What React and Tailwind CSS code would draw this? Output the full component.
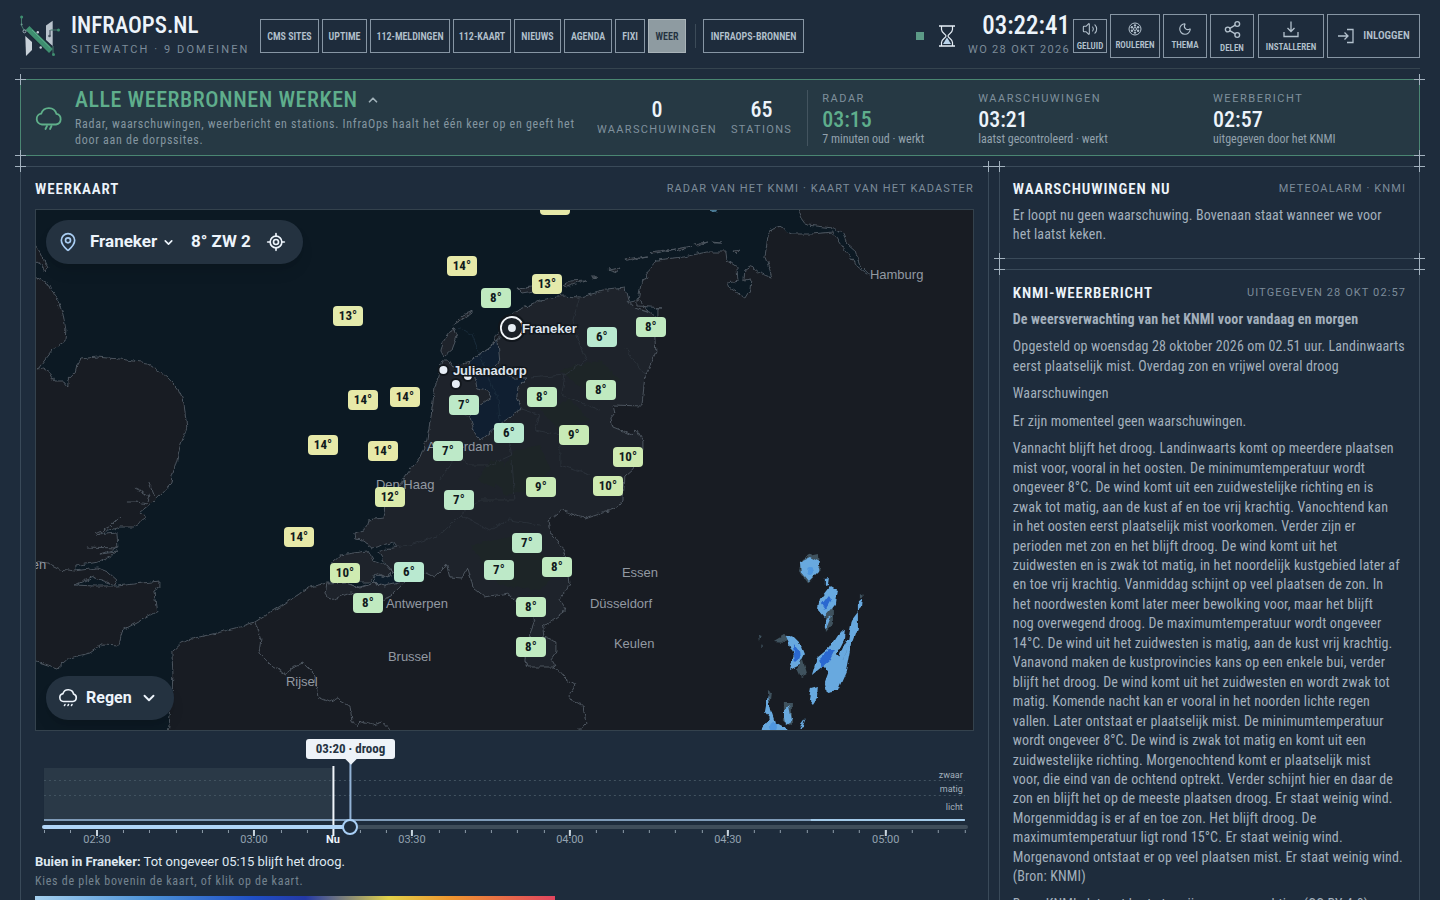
import { ChevronDown, ChevronUp, LocateFixed, MapPin, Moon, Share2, Volume2 } from "lucide-react";

const tabs = [
    { name: "CMS SITES", width: "w-[59px]" },
    { name: "UPTIME", width: "w-[45px]" },
    { name: "112-MELDINGEN", width: "w-20" },
    { name: "112-KAART", width: "w-[58px]" },
    { name: "NIEUWS", width: "w-[47px]" },
    { name: "AGENDA", width: "w-12" },
    { name: "FIXI", width: "w-[30px]" },
    { name: "WEER", width: "w-[38px]", active: true },
];

// Temperature readings, placed on the map canvas
const stations = [
    [555, 205, 14], [462, 266, 14], [547, 284, 13], [496, 298, 8], [348, 316, 13], [651, 327, 8],
    [602, 337, 6], [601, 390, 8], [542, 397, 8], [405, 397, 14], [363, 400, 14], [464, 405, 7],
    [509, 433, 6], [574, 435, 9], [323, 445, 14], [383, 451, 14], [448, 451, 7], [628, 457, 10],
    [608, 486, 10], [541, 487, 9], [390, 497, 12], [459, 500, 7], [299, 537, 14], [527, 543, 7],
    [557, 567, 8], [499, 570, 7], [345, 573, 10], [409, 572, 6], [368, 603, 8], [531, 607, 8], [531, 647, 8],
];

const temperatureColors = {
    6: "#b9e9d0",
    7: "#bde9c8",
    8: "#c0eac0",
    9: "#c8eab6",
    10: "#cfebb1",
    12: "#dcebab",
    13: "#e4eaab",
    14: "#e7e9a8",
};

const cities = [
    ["Hamburg", 870, 279], ["Amsterdam", 427, 451], ["Den Haag", 376, 489], ["Antwerpen", 386, 608],
    ["Brussel", 388, 661], ["Rijsel", 286, 686], ["Essen", 622, 577], ["Düsseldorf", 590, 608],
    ["Keulen", 614, 648], ["Londen", 3, 569],
];

const report = [
    "Opgesteld op woensdag 28 oktober 2026 om 02.51 uur. Landinwaarts\neerst plaatselijk mist. Overdag zon en vrijwel overal droog",
    "Waarschuwingen",
    "Er zijn momenteel geen waarschuwingen.",
    "Vannacht blijft het droog. Landinwaarts komt op meerdere plaatsen\nmist voor, vooral in het oosten. De minimumtemperatuur wordt\nongeveer 8°C. De wind komt uit een zuidwestelijke richting en is\nzwak tot matig, aan de kust af en toe vrij krachtig. Vanochtend kan\nin het oosten eerst plaatselijk mist voorkomen. Verder zijn er\nperioden met zon en het blijft droog. De wind komt uit het\nzuidwesten en is zwak tot matig, in het noordelijk kustgebied later af\nen toe vrij krachtig. Vanmiddag schijnt op veel plaatsen de zon. In\nhet noordwesten komt later meer bewolking voor, maar het blijft\nnog overwegend droog. De maximumtemperatuur wordt ongeveer\n14°C. De wind uit het zuidwesten is matig, aan de kust vrij krachtig.\nVanavond maken de kustprovincies kans op een enkele bui, verder\nblijft het droog. De wind komt uit het zuidwesten en wordt zwak tot\nmatig. Komende nacht kan er vooral in het noorden lichte regen\nvallen. Later ontstaat er plaatselijk mist. De minimumtemperatuur\nwordt ongeveer 8°C. De wind is zwak tot matig en komt uit een\nzuidwestelijke richting. Morgenochtend komt er plaatselijk mist\nvoor, die eind van de ochtend optrekt. Verder schijnt hier en daar de\nzon en blijft het op de meeste plaatsen droog. Er staat weinig wind.\nMorgenmiddag is er af en toe zon. Het blijft droog. De\nmaximumtemperatuur ligt rond 15°C. Er staat weinig wind.\nMorgenavond ontstaat er op veel plaatsen mist. Er staat weinig wind.\n(Bron: KNMI)",
    "Bron: KNMI, dataset korte termijn weerverwachting (CC BY 4.0)",
];

const hours = [["02:30", 97], ["03:00", 254], ["03:30", 412], ["04:00", 570], ["04:30", 728], ["05:00", 886]];

const Cross = ({ place }) => (
    <span className={`absolute size-[11px] ${place}`} aria-hidden="true">
        <span className="absolute inset-x-0 top-[5px] h-px bg-[#a3b2bf]"></span>
        <span className="absolute inset-y-0 left-[5px] w-px bg-[#a3b2bf]"></span>
    </span>
);

const Corners = () => (
    <>
        <Cross place="-left-[6px] -top-[6px]" />
        <Cross place="-right-[6px] -top-[6px]" />
        <Cross place="-left-[6px] -bottom-[6px]" />
        <Cross place="-right-[6px] -bottom-[6px]" />
    </>
);

const Logo = () => (
    <svg viewBox="0 0 40 42" className="h-[42px] w-10 shrink-0" fill="none">
        <path d="M5.3 21 12 27v8l-6 6z" fill="#c9d2da" />
        <path d="M26 10.5 32.7 5.7V31L26 25z" fill="#b9c3cc" />
        <path d="M30 15v6" stroke="#33414f" strokeWidth="1" />
        <path d="m10 15.5 19.5 19" stroke="#1d2a38" strokeWidth="8" />
        <path d="m9.5 15 19.5 19" stroke="#3f8f70" strokeWidth="5.5" strokeLinecap="square" />
        <path d="m12 15 18 17.500" stroke="#5cae8c" strokeWidth="1" />
        <path d="M1.500 2v8.500l3 5.500M38.500 15h-8M33 31v8" stroke="#46796d" strokeWidth="1" />
        <circle cx="1.600" cy="2" r="1.500" fill="#3f8f70" />
        <circle cx="1.600" cy="9.500" r="1" fill="#6f9f92" />
        <circle cx="4.500" cy="16.300" r="1.500" stroke="#9aa8b4" />
        <circle cx="38.500" cy="15" r="1.500" fill="#3f8f70" />
        <circle cx="33.500" cy="39.500" r="1.500" fill="#3f8f70" />
        <circle cx="17.800" cy="17.300" r="1.200" fill="#c9d2da" />
        <circle cx="20.700" cy="32.500" r="1.200" fill="#c9d2da" />
        <circle cx="29.500" cy="21" r="1.300" fill="#46535f" />
    </svg>
);

const ActionButton = ({ label, size, children }) => (
    <button type="button" className={`flex shrink-0 flex-col items-center justify-center gap-1 border border-[#8796a4] text-[#b3c1cd] ${size}`}>
        {children}
        <span className="font-['Roboto_Condensed',sans-serif] text-[9px] leading-[10px] font-semibold">{label}</span>
    </button>
);

const Header = () => (
    <header className="flex items-center border-b border-[#35444f] pt-3.5 pb-2.5">
        <div className="flex w-60 shrink-0 items-center gap-[11px]">
            <Logo />
            <div>
                <h1 className="font-['Roboto_Condensed',sans-serif] text-[23px] leading-6 font-medium text-[#edf4fb]">INFRAOPS.NL</h1>
                <p className="mt-1 text-[11px] leading-4 tracking-[0.19em] whitespace-nowrap text-[#7c8b99]">SITEWATCH · 9 DOMEINEN</p>
            </div>
        </div>

        <nav className="flex shrink-0 items-center gap-[3px] font-['Roboto_Condensed',sans-serif] text-[10px] font-semibold">
            {tabs.map((tab) => (
                <a
                    key={tab.name}
                    href="#"
                    className={`flex h-[34px] shrink-0 items-center justify-center border whitespace-nowrap ${tab.width} ${tab.active ? "border-[#a9b3b8] bg-[#8e9ba1] text-[#243240]" : "border-[#8796a4] text-[#b3c1cd]"}`}
                >
                    {tab.name}
                </a>
            ))}
            <span className="mr-1 ml-1.5 h-6 w-px bg-[#3c4b58]"></span>
            <a href="#" className="flex h-[34px] w-[101px] shrink-0 items-center justify-center border border-[#8796a4] whitespace-nowrap text-[#b3c1cd]">INFRAOPS-BRONNEN</a>
        </nav>

        <div className="ml-auto flex items-center gap-[3px]">
            <span className="mr-3 size-2 bg-[#5c9a86]"></span>
            <svg viewBox="0 0 16 22" className="mr-2.5 h-[22px] w-4 shrink-0" fill="none" stroke="#e6eef6" strokeWidth="1.200">
                <path d="M0 1h16M0 21h16" strokeWidth="1.500" />
                <path d="M2.500 1v3.500C2.500 8 7 9 7 11s-4.500 3-4.500 6.500V21M13.500 1v3.500C13.500 8 9 9 9 11s4.500 3 4.500 6.500V21" />
                <path d="M8 12.500 12 19H4z" fill="#b9d3ea" stroke="none" />
            </svg>
            <div className="text-right">
                <p className="font-['Roboto_Condensed',sans-serif] text-[25px] leading-6 font-medium text-[#edf4fb]">03:22:41</p>
                <p className="mt-1 text-[11px] leading-4 tracking-[0.12em] whitespace-nowrap text-[#7c8b99]">WO 28 OKT 2026</p>
            </div>
            <ActionButton label="GELUID" size="h-[34px] w-[34px]">
                <Volume2 size={16} strokeWidth={1.6} />
            </ActionButton>
            <ActionButton label="ROULEREN" size="h-11 w-[50px]">
                <svg viewBox="0 0 14 14" className="size-3.5" fill="none" stroke="currentColor" strokeWidth="1">
                    <circle cx="7" cy="7" r="6" />
                    <circle cx="7" cy="7" r="1.500" />
                    <g fill="currentColor" stroke="none">
                        <circle cx="7" cy="3.400" r="1.200" />
                        <circle cx="10.100" cy="5.200" r="1.200" />
                        <circle cx="10.100" cy="8.800" r="1.200" />
                        <circle cx="7" cy="10.600" r="1.200" />
                        <circle cx="3.900" cy="8.800" r="1.200" />
                        <circle cx="3.900" cy="5.200" r="1.200" />
                    </g>
                </svg>
            </ActionButton>
            <ActionButton label="THEMA" size="h-11 w-11">
                <Moon size={14} strokeWidth={2} />
            </ActionButton>
            <ActionButton label="DELEN" size="h-11 w-11">
                <Share2 size={19} strokeWidth={1.7} />
            </ActionButton>
            <ActionButton label="INSTALLEREN" size="ml-px h-11 w-[66px]">
                <svg viewBox="0 0 18 18" className="size-[18px]" fill="none" stroke="currentColor" strokeWidth="1.300">
                    <path d="M9 1.500v10M5.500 8 9 11.500 12.500 8M2 12v4.500h14V12" />
                </svg>
            </ActionButton>
            <button type="button" className="flex h-11 w-[93px] shrink-0 items-center justify-center gap-2 border border-[#8796a4] font-['Roboto_Condensed',sans-serif] text-[11px] font-semibold text-[#b3c1cd]">
                <svg viewBox="0 0 18 18" className="size-[18px]" fill="none" stroke="currentColor" strokeWidth="1.300">
                    <path d="M1 9h10M7.500 5.500 11 9l-3.500 3.500M10 2.500h6v13h-6" />
                </svg>
                INLOGGEN
            </button>
        </div>
    </header>
);

const Source = ({ label, time, note, green }) => (
    <div>
        <p className="text-[11px] leading-4 tracking-[0.14em] text-[#7f909c]">{label}</p>
        <p className={`font-['Roboto_Condensed',sans-serif] text-[22px] leading-[26px] font-medium ${green ? "text-[#5fae8c]" : "text-[#edf4fb]"}`}>{time}</p>
        <p className="font-['Roboto_Condensed',sans-serif] text-[12px] leading-3 whitespace-nowrap text-[#93a2ad]">{note}</p>
    </div>
);

const StatusBar = () => (
    <section className="relative mt-2.5 flex items-center border border-[#4a8672] bg-[#263944] px-3.5 pt-2 pb-[7px]">
        <Corners />
        <svg viewBox="0 0 28 28" className="size-7 shrink-0" fill="none" stroke="#5fb08a" strokeWidth="1.800" strokeLinecap="round" strokeLinejoin="round">
            <path d="M7 20.500a5.500 5.500 0 0 1-.8-10.900 8 8 0 0 1 15.300.3A5.400 5.400 0 0 1 21 20.500z" />
            <path d="m12 22-1.500 3M16.500 22 15 25" />
        </svg>
        <div className="ml-3 w-[512px] shrink-0">
            <h2 className="flex items-center gap-2 font-['Roboto_Condensed',sans-serif] text-[22px] leading-6 font-medium tracking-wide text-[#5fae8c]">
                ALLE WEERBRONNEN WERKEN
                <ChevronUp size={14} strokeWidth={3} className="text-[#9fb0b8]" />
            </h2>
            <p className="mt-1 font-['Roboto_Condensed',sans-serif] text-[12px] leading-4 tracking-[0.06em] text-[#8496a0]">
                Radar, waarschuwingen, weerbericht en stations. InfraOps haalt het één keer op en geeft het door aan de dorpssites.
            </p>
        </div>
        <div className="ml-2.5 flex shrink-0 gap-3.5 text-center">
            {[["0", "WAARSCHUWINGEN"], ["65", "STATIONS"]].map(([value, label]) => (
                <div key={label}>
                    <p className="font-['Roboto_Condensed',sans-serif] text-[22px] leading-6 font-medium text-[#edf4fb]">{value}</p>
                    <p className="text-[11px] leading-4 tracking-[0.12em] text-[#7f909c]">{label}</p>
                </div>
            ))}
        </div>
        <div className="ml-[15px] grid h-14 flex-1 grid-cols-[156fr_235fr_192fr] items-center border-l border-[#43545f] pl-3.5">
            <Source label="RADAR" time="03:15" note="7 minuten oud · werkt" green />
            <Source label="WAARSCHUWINGEN" time="03:21" note="laatst gecontroleerd · werkt" />
            <Source label="WEERBERICHT" time="02:57" note="uitgegeven door het KNMI" />
        </div>
    </section>
);

const PanelTitle = ({ title, note }) => (
    <div className="flex h-5 items-center justify-between">
        <h2 className="font-['Roboto_Condensed',sans-serif] text-[15px] leading-5 font-semibold tracking-[0.06em] text-[#edf4fb]">{title}</h2>
        <span className="text-[11px] leading-5 tracking-[0.1em] text-[#7c8b99]">{note}</span>
    </div>
);

const MapDrawing = () => (
    <svg viewBox="36 210 937 520" preserveAspectRatio="xMidYMid slice" className="absolute inset-0 size-full">
        <defs>
            <filter id="rugged" x="-5%" y="-5%" width="110%" height="110%" colorInterpolationFilters="sRGB">
                <feTurbulence type="fractalNoise" baseFrequency="0.15" numOctaves="3" seed="4" />
                <feDisplacementMap in="SourceGraphic" scale="5" xChannelSelector="R" yChannelSelector="G" />
            </filter>
            <filter id="rain" x="-10%" y="-10%" width="120%" height="120%" colorInterpolationFilters="sRGB">
                <feTurbulence type="fractalNoise" baseFrequency="0.12" numOctaves="2" seed="9" />
                <feDisplacementMap in="SourceGraphic" scale="5" xChannelSelector="R" yChannelSelector="G" />
                <feGaussianBlur stdDeviation="0.7" />
            </filter>
        </defs>
        <rect x="36" y="210" width="937" height="520" fill="#0c1923" />
        <g filter="url(#rugged)" stroke="#525b65" strokeWidth="0.900" strokeLinejoin="round">
            {/* Great Britain */}
            <path fill="#181c23" d="M30 236 36 246 42 255 48 268 46 272 43 266 36 262 30 262V277L36 277 50 285 57 300 63 313 66 330 65 341 53 350 45 360 38 369 43 368 50 373 54 381 63 381 68 387 68 380 75 373 77 365 81 359 97 357 120 359 147 363 167 377 178 388 184 403 187 428 180 447 177 460 172 477 171 483 162 493 150 505 140 513 147 518 133 527 120 527 110 530 97 535 117 533 118 548 100 554 117 552 103 561 75 566 75 571 98 568 108 572 117 580 115 585 93 577 75 585 95 586 117 586 160 581 160 587 154 591 157 612 138 622 123 630 119 645 103 644 90 653 70 658 57 669 36 662H30z" />
            <path fill="none" d="M127 502 137 502 147 504 150 496 135 489M149 482 155 497M95 534 110 527 120 517M87 547 117 548M36 561 48 563 60 569 75 571" />
            {/* Belgium, France, Germany */}
            <path fill="#181c23" d="M168 735 172 700 173 673 172 652 182 643 195 638 217 633 240 627 255 622 287 602 310 587 327 583 346 583 360 587 373 583 383 585 400 578 420 500 500 330 640 300 647 312 648 317 658 317 658 308 663 308 638 306 638 300 642 280 648 278 647 272 657 260 683 257 707 252 726 252 727 260 737 267 738 280 728 282 730 288 738 293 745 298 750 290 751 279 744 280 745 270 752 266 760 273 772 278 770 270 765 257 768 237 773 228 782 226 787 232 792 234 812 234 833 232 843 247 853 260 858 268 870 276 867 272 860 265 855 250 847 243 842 232 833 228 807 225 802 218 797 205H980V735z" />
            {/* The Netherlands */}
            <path fill="#1e232b" d="M400 578 393 572 387 565 378 552 397 547 393 542 373 548 363 540 355 539 354 533 365 530 368 520 383 518 385 507 390 500 405 477 420 457 427 440 431 417 435 387 439 373 442 360 448 360 453 367 470 361 498 341 500 338 502 328 507 318 515 312 540 300 563 296 580 297 607 290 625 288 628 300 635 308 647 312 658 317 655 337 656 353 645 377 642 406 613 405 615 413 611 418 613 427 623 431 632 435 637 430 643 440 643 450 633 470 625 477 623 500 617 508 585 519 562 510 548 521 550 532 559 543 567 558 570 583 559 600 566 610 543 627 544 637 557 642 557 652 551 660 555 667 527 667 525 660 530 633 535 620 516 603 509 593 485 597 473 587 468 568 462 578 450 577 447 565 435 577 427 573 409 578 390 597 383 600 350 593 340 597 330 600 325 593 327 584 346 583 360 588 373 583 385 586z" />
            <path fill="#1e232b" d="M332 562 340 555 367 551 373 560 387 565 393 572 387 578 377 573 370 582 360 582 333 577z" />
            <path fill="#0e1d2b" d="M373 583 377 574 387 578 400 574 407 580 385 585z" />
            {/* IJsselmeer */}
            <path fill="#101f31" d="M470 361 498 341 500 363 495 367 505 373 512 378 527 378 518 387 517 398 522 409 503 422 480 440 475 433 470 417 480 405 492 397 488 390 477 388 475 377 467 370z" />
            {/* Wadden islands */}
            <path fill="#1e232b" d="M453 328 457 337 452 350 444 357 441 352 443 342zM453 325 463 315 474 311 463 319zM518 289 532 287 540 290 522 293zM563 285 570 281 586 280 567 287zM591 277 597 277 592 279zM608 270 620 268 617 273zM625 259 647 256 628 261zM650 252 675 249 652 254zM677 249 692 246 680 251zM695 244 708 242 698 246zM711 241 722 242 713 242zM734 251 739 250 736 253z" />
            <path fill="none" d="M255 622 261 640 259 653 273 667 287 675 290 668 303 663 315 675 318 697 330 702 337 698 350 705 352 720 357 727 361 722 373 725 383 722 393 733M555 667 567 680 575 685 569 695 573 702 583 705 586 723 577 733" />
        </g>
        {/* Woodland */}
        <g fill="#1d2a22" opacity=".4" filter="url(#rugged)">
            <path d="M515 450 540 445 550 470 530 490 505 495 495 480zM560 370 600 360 620 380 590 395zM470 545 520 535 560 570 540 590 500 585zM490 460 505 462 495 488 478 480zM540 410 570 400 590 420 560 430z" />
        </g>
        <g fill="none" stroke="#2d353d" strokeWidth=".8" filter="url(#rugged)">
            <path d="M580 297 573 320 580 345 587 360 565 375 530 378M625 348 645 375M565 375 562 395 580 402 600 410M522 409 540 415 535 430 560 435 560 465 590 475M503 422 512 455 490 465 470 465 450 450M512 460 515 500 480 500 460 515 440 535 410 545 385 548M460 515 490 530 510 520 540 525M450 405 470 417M460 450 440 480" />
            <path d="M458 328 472 334 482 360 492 385 498 397 500 420" stroke="#1d3040" />
        </g>
        {/* Rain echoes */}
        <g filter="url(#rain)">
            <g fill="#3f525e">
                <path d="M810 555 819 553 820 570 808 583 799 570 802 560zM826 597 830 594 833 600 833 624 826 632zM774 641 784 635 792 638 786 642zM797 668 803 660 807 674 801 677zM759 635 762 636 760 642zM762 644 763 646 761 647zM768 690 771 692 769 710zM784 703 792 703 792 725 784 722zM860 592 863 594 860 598z" />
            </g>
            <g fill="#68a9df">
                <path d="M800 562 810 557 820 562 818 572 809 581 801 571zM825 578 829 577 828 584 825 585zM820 599 830 586 837 590 835 605 825 617 818 609zM826 620 832 616 826 630z" />
                <path d="M786 637 793 636 801 644 805 654 800 664 790 669 794 655zM812 675 817 658 829 648 838 634 845 630 844 640 837 654 843 660 852 640 846 672 838 690 827 692 825 683 829 672 823 666zM858 602 863 598 862 608 858 612zM848 642 852 620 858 612 858 628 853 642zM852 640 842 662 838 680 834 670 846 640z" />
                <path d="M811 688 818 686 817 698 813 704 809 699zM765 712 768 695 771 710 775 722 786 728 787 735H758L764 725 770 718zM784 712 789 705 792 720 786 724zM799 728 806 718 803 726z" />
            </g>
            <g fill="#2a68d0">
                <path d="M822 604 829 595 832 599 826 610zM793 643 799 651 800 658 795 662 794 655zM819 660 829 650 835 650 830 660 822 667z" />
            </g>
            <ellipse cx="810" cy="571" rx="3" ry="4" fill="#4f97df" />
            <ellipse cx="774" cy="727" rx="4" ry="5" fill="#4f97df" />
            <ellipse cx="714" cy="210" rx="3" ry="2" fill="#4b7b96" />
        </g>
        <g fill="#9299a2" fontFamily="Liberation Sans, sans-serif" fontSize="13">
            {cities.map(([name, x, y]) => (
                <text key={name} x={x} y={y}>{name}</text>
            ))}
        </g>
        <g fill="#e6edf5" stroke="#12171d" strokeWidth="2">
            <circle cx="512" cy="328" r="14" fill="#11161c" stroke="none" />
            <circle cx="512" cy="328" r="11" fill="#1a2028" stroke="#f1f5f9" strokeWidth="1.800" />
            <circle cx="512" cy="328" r="4" stroke="none" />
            <circle cx="443.500" cy="370" r="5" />
            <circle cx="468" cy="376" r="5" />
            <circle cx="456" cy="384" r="5" />
        </g>
        <g fill="#dde4ee" stroke="#12171d" strokeWidth="3" paintOrder="stroke" fontFamily="Liberation Sans, sans-serif" fontSize="13" fontWeight="700">
            <text x="522" y="333">Franeker</text>
            <text x="453" y="375">Julianadorp</text>
        </g>
    </svg>
);

const WeatherMap = () => (
    <div className="relative mt-2.5 h-[522px] overflow-hidden border border-[#34424d] bg-[#0c1923]">
        <MapDrawing />
        {stations.map(([x, y, temperature]) => (
            <span
                key={`${x}-${y}`}
                className="absolute flex h-5 w-[30px] -translate-x-1/2 -translate-y-1/2 items-center justify-center rounded-[4px] font-['Roboto_Condensed',sans-serif] text-[13px] font-bold text-[#111a1c]"
                style={{ left: `${((x - 36) / 937) * 100}%`, top: `${((y - 210) / 520) * 100}%`, backgroundColor: temperatureColors[temperature] }}
            >
                {temperature}°
            </span>
        ))}

        {/* Place picker */}
        <div className="absolute top-2.5 left-2.5 flex h-11 w-[257px] items-center rounded-full bg-[#243240] pl-3 text-[17px] font-bold text-[#edf4fb] shadow-lg">
            <MapPin size={20} strokeWidth={2} className="shrink-0 text-[#a9cdf2]" />
            <label htmlFor="place" className="sr-only">Plek</label>
            <select id="place" className="ml-3 w-[84px] appearance-none bg-transparent">
                <option>Franeker</option>
                <option>Julianadorp</option>
            </select>
            <ChevronDown size={13} strokeWidth={3} className="pointer-events-none -ml-3 shrink-0" />
            <span className="ml-4 w-[75px] whitespace-nowrap">8° ZW 2</span>
            <button type="button" aria-label="Mijn locatie">
                <LocateFixed size={20} strokeWidth={2} />
            </button>
        </div>

        {/* Layer picker */}
        <div className="absolute bottom-2.5 left-2.5 flex h-11 w-32 items-center rounded-full bg-[#243240] pl-3 text-[16px] font-bold text-[#edf4fb] shadow-lg">
            <svg viewBox="0 0 20 20" className="size-5 shrink-0" fill="none" stroke="currentColor" strokeWidth="1.600" strokeLinecap="round">
                <path d="M5.500 13.500a4 4 0 0 1-.5-7.900 5.500 5.500 0 0 1 10.600.5 3.800 3.800 0 0 1-.6 7.400z" />
                <path d="m7 16.500-.5 1M10.500 16.500l-.5 1M14 16.500l-.5 1" />
            </svg>
            <label htmlFor="layer" className="sr-only">Kaartlaag</label>
            <select id="layer" className="ml-2 w-[70px] appearance-none bg-transparent">
                <option>Regen</option>
                <option>Wind</option>
            </select>
            <ChevronDown size={18} strokeWidth={2.5} className="pointer-events-none -ml-4 shrink-0" />
        </div>
    </div>
);

const Timeline = () => (
    <div className="relative h-[118px]">
        <svg viewBox="35 731 939 118" preserveAspectRatio="none" className="absolute inset-0 size-full">
            <rect x="44" y="768" width="289" height="52" fill="#2a3947" />
            <path d="M44 780.500H965M44 795.500H965" stroke="#425360" strokeDasharray="2 3" />
            <path d="M44 820H965" stroke="#7f9bb8" strokeWidth="2" />
            <path d="M811 820H965" stroke="#a4cbea" strokeWidth="2" />
            {[...Array(36).keys()].map((i) => (
                <path key={i} d={`M${Math.round(44 + i * 26.3)}.5 830v3`} stroke="#8d9ca9" />
            ))}
            {hours.map(([hour, x]) => (
                <path key={hour} d={`M${x} 830v6`} stroke="#c9d5df" strokeWidth="2" />
            ))}
            <path d="M333.500 766V836" stroke="#f1f6fb" strokeWidth="2" />
            <path d="M350.500 762V822" stroke="#93b3d6" strokeWidth="2" />
            <g fill="#93a2b0" fontFamily="Roboto, sans-serif" fontSize="11" textAnchor="middle">
                {hours.map(([hour, x]) => (
                    <text key={hour} x={x} y="843">{hour}</text>
                ))}
            </g>
            <text x="333" y="843" fill="#edf4fb" fontFamily="Roboto, sans-serif" fontSize="11" fontWeight="700" textAnchor="middle">Nu</text>
            <g fill="#a3b0bc" fontFamily="Roboto, sans-serif" fontSize="9" textAnchor="end">
                <text x="963" y="778">zwaar</text>
                <text x="963" y="792">matig</text>
                <text x="963" y="810">licht</text>
            </g>
        </svg>
        <output htmlFor="moment" className="absolute top-2 left-[271px] flex h-5 w-[89px] items-center justify-center rounded-[3px] bg-[#eef3f8] font-['Roboto_Condensed',sans-serif] text-[13px] font-bold whitespace-nowrap text-[#263442]">
            03:20 · droog
            <span className="absolute -bottom-1 size-2 rotate-45 bg-[#eef3f8]"></span>
        </output>
        <input
            id="moment"
            type="range"
            aria-label="Tijdstip"
            defaultValue="33"
            className="absolute top-[94px] right-1.5 left-[7px] h-1 appearance-none rounded-sm bg-[linear-gradient(to_right,#b1d5f8_33%,#3f4d5a_33%)] [&::-webkit-slider-thumb]:size-4 [&::-webkit-slider-thumb]:appearance-none [&::-webkit-slider-thumb]:rounded-full [&::-webkit-slider-thumb]:border-2 [&::-webkit-slider-thumb]:border-[#a9d0f7] [&::-webkit-slider-thumb]:bg-[#1e2c3c]"
        />
    </div>
);

const App = () => (
    <div className="flex h-screen flex-col overflow-hidden bg-[#1e2c3c] px-5 font-[Roboto,sans-serif] text-[#a3b0bc]">
        <Header />
        <StatusBar />

        <main className="mt-2.5 grid min-h-0 flex-1 grid-cols-[2.3fr_1fr] gap-2.5">
            <section className="relative h-[1000px] border border-[#3a4a59] px-3.5 pt-3">
                <Corners />
                <PanelTitle title="WEERKAART" note="RADAR VAN HET KNMI · KAART VAN HET KADASTER" />
                <WeatherMap />
                <Timeline />
                <p className="mt-[3px] text-[13px] leading-5 text-[#dfe8f1]">
                    <b>Buien in Franeker:</b> Tot ongeveer 05:15 blijft het droog.
                </p>
                <p className="font-['Roboto_Condensed',sans-serif] text-[12px] leading-[19px] tracking-[0.06em] text-[#74838f]">Kies de plek bovenin de kaart, of klik op de kaart.</p>
                <div className="mt-[5px] h-3 w-[520px] bg-[linear-gradient(to_right,#a5d0ee,#4c92d8_22%,#1f4fc6_42%,#2439a6_52%,#e2d24a_68%,#f0962f_80%,#e2455f)]"></div>
            </section>

            <div className="flex flex-col gap-2.5">
                <section className="relative shrink-0 border border-[#3a4a59] px-[13px] pt-3 pb-3.5">
                    <Corners />
                    <PanelTitle title="WAARSCHUWINGEN NU" note="METEOALARM · KNMI" />
                    <p className="mt-[7px] font-['Roboto_Condensed',sans-serif] text-[14px] leading-[19px] tracking-[0.01em] whitespace-pre-line">
                        {"Er loopt nu geen waarschuwing. Bovenaan staat wanneer we voor\nhet laatst keken."}
                    </p>
                </section>
                <section className="relative shrink-0 border border-[#3a4a59] px-[13px] pt-[13px] pb-5">
                    <Corners />
                    <PanelTitle title="KNMI-WEERBERICHT" note="UITGEGEVEN 28 OKT 02:57" />
                    <div className="mt-[7px] flex flex-col gap-2 font-['Roboto_Condensed',sans-serif] text-[14px] leading-[1.39] tracking-[0.01em] whitespace-pre-line">
                        <h3 className="font-bold">De weersverwachting van het KNMI voor vandaag en morgen</h3>
                        {report.map((paragraph) => (
                            <p key={paragraph}>{paragraph}</p>
                        ))}
                    </div>
                </section>
            </div>
        </main>
    </div>
);

export default App;
